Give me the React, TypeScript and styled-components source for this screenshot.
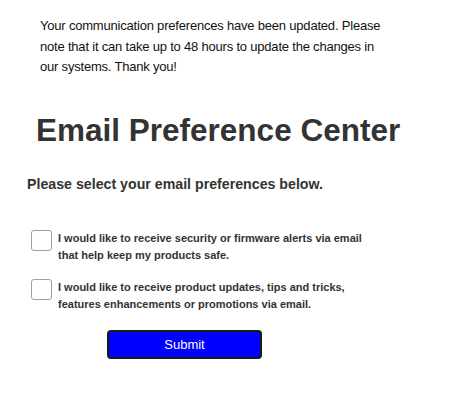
import React from "react";
import styled, { createGlobalStyle } from "styled-components";

const Global = createGlobalStyle`
  html, body { margin: 0; padding: 0; background: #fff; }
  body { font-family: "Liberation Sans", Arial, sans-serif; }
`;

const Page = styled.div`
  width: 450px;
  height: 418px;
  display: flex;
  flex-direction: column;
  box-sizing: border-box;
  padding-top: 16px;
`;

const Notice = styled.p`
  margin: 0 0 0 40px;
  width: 352px;
  font-size: 13px;
  letter-spacing: -0.2px;
  line-height: 20.5px;
  color: #111;
`;

const Title = styled.h1`
  margin: 34px 0 0 36px;
  font-size: 31.5px;
  line-height: 36px;
  font-weight: bold;
  color: #333;
`;

const Subtitle = styled.h2`
  margin: 27px 0 0 27px;
  font-size: 14.2px;
  line-height: 18px;
  font-weight: bold;
  color: #333;
`;

const Options = styled.div`
  display: flex;
  flex-direction: column;
  gap: 15px;
  margin: 37px 0 0 31px;
`;

const Option = styled.label`
  display: flex;
  align-items: flex-start;
  gap: 6px;
`;

const Box = styled.span`
  flex: none;
  width: 19px;
  height: 19px;
  border: 1px solid #a0a0a0;
  border-radius: 3px;
  background: #fff;
`;

const LabelText = styled.span`
  width: 318px;
  font-size: 11px;
  line-height: 17px;
  font-weight: bold;
  color: #333;
`;

const Submit = styled.button`
  margin: 17px 0 0 107px;
  width: 155px;
  height: 29px;
  box-sizing: border-box;
  background: #0000ff;
  border: 2px solid #1a1a1a;
  border-radius: 4px;
  color: #fff;
  font-family: "Liberation Sans", Arial, sans-serif;
  font-size: 13px;
  padding: 0;
`;

export default function App() {
  return (
    <Page>
      <Global />
      <Notice>
        Your communication preferences have been updated. Please note that it
        can take up to 48 hours to update the changes in our systems. Thank you!
      </Notice>
      <Title>Email Preference Center</Title>
      <Subtitle>Please select your email preferences below.</Subtitle>
      <Options>
        <Option>
          <Box />
          <LabelText>
            I would like to receive security or firmware alerts via email that
            help keep my products safe.
          </LabelText>
        </Option>
        <Option>
          <Box />
          <LabelText>
            I would like to receive product updates, tips and tricks, features
            enhancements or promotions via email.
          </LabelText>
        </Option>
      </Options>
      <Submit type="button">Submit</Submit>
    </Page>
  );
}
